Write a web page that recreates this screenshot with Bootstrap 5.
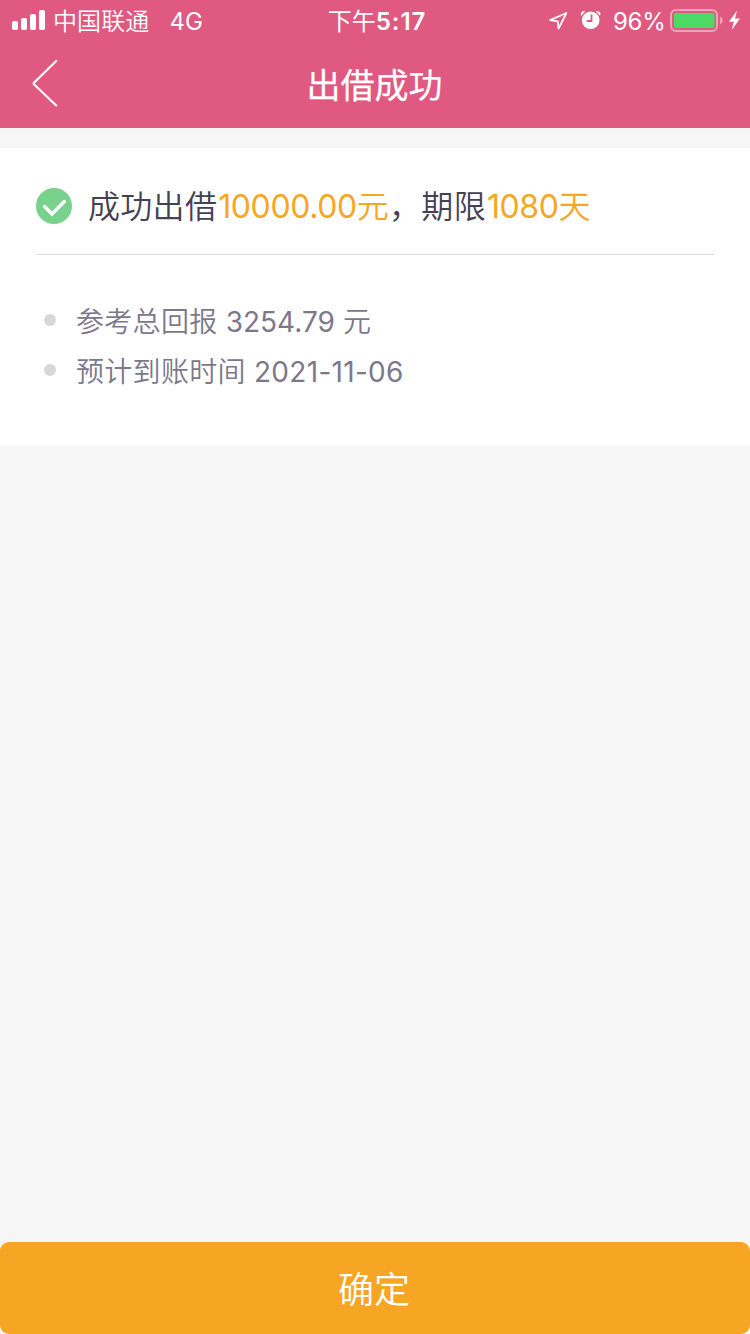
<!DOCTYPE html>
<html lang="zh-CN">
<head>
<meta charset="utf-8">
<meta name="viewport" content="width=device-width, initial-scale=1">
<title>出借成功</title>
<link href="https://cdn.jsdelivr.net/npm/bootstrap@5.3.0/dist/css/bootstrap.min.css" rel="stylesheet">
<style>
  body { background: #f6f6f6; font-family: Inter, "Noto Sans CJK SC", sans-serif; font-weight: 350; }
  i { font-style: normal; font-weight: 400; }
  svg { display: block; flex: none; }
  .app-header { background: #df5981; height: 128px; }
  .status-bar { height: 40px; font-size: 24px; line-height: 40px; }
  .status-bar span, .clock { padding-top: 2px; }
  .status-bar .side { flex: 1 1 0; }
  .status-bar .carrier { margin-left: 7px; padding-top: 4px; letter-spacing: .1px; }
  .status-bar .network { margin-left: 20px; padding-top: 3px; font-weight: 400; }
  .status-bar .percent { margin: 0 -1px 0 1px; padding-top: 3px; letter-spacing: -.3px; width: 51px; font-weight: 400; }
  .clock { font-weight: 400; }
  .clock b { font-weight: 600; letter-spacing: .9px; }
  .title-bar { height: 88px; padding: 0 32px; }
  .title-bar svg { margin-top: -2px; }
  .title-bar h1 { font-size: 34px; line-height: 88px; font-weight: 400; -webkit-text-stroke: .25px #fff; padding: 3px 1px 0 0; }
  .result { margin-top: 20px; height: 298px; padding: 0 36px; }
  .summary { height: 107px; border-bottom: 1px solid #dcdcdc; padding-top: 10px; color: #444155; font-size: 32px; letter-spacing: .3px; }
  .summary p { margin-left: 16px; padding-top: 2px; }
  .amount { color: #f7a623; }
  .amount i { letter-spacing: -.4px; margin-left: 1px; }
  .details { padding: 40px 8px 0; color: #7c788a; font-size: 28px; letter-spacing: .3px; }
  .details li { height: 50px; line-height: 50px; }
  .details p { padding-top: 3px; }
  .details i { letter-spacing: 0; }
  .details .date { letter-spacing: .3px; }
  .dot { width: 12px; height: 12px; background: #d8d8d8; margin-right: 20px; }
  .btn-confirm { height: 92px; border: 0; border-radius: 9px; background: #f7a623; font-size: 36px; font-weight: 350; padding: 9px 2px 6px 0; --bs-btn-color: #fff; --bs-btn-hover-color: #fff; }
</style>
</head>
<body>
<div class="d-flex flex-column vh-100">
  <header class="app-header text-white">
    <div class="status-bar d-flex">
      <div class="side d-flex align-items-center">
        <svg width="46" height="40" fill="#fff"><rect x="12" y="21" width="6" height="9" rx="1.8"/><rect x="21" y="18" width="6" height="12" rx="1.8"/><rect x="30" y="14" width="6" height="16" rx="1.8"/><rect x="39" y="10" width="6" height="20" rx="1.8"/></svg>
        <span class="carrier">中国联通</span><span class="network">4G</span>
      </div>
      <div class="clock ps-1">下午<b>5:17</b></div>
      <div class="side d-flex justify-content-end align-items-center">
        <svg width="65" height="40" viewBox="547 0 65 40">
          <path d="M566.400 13 550 20.100l7.800 1.300.8 7.300z" fill="none" stroke="#fff" stroke-width="1.800" stroke-linejoin="round"/>
          <circle cx="590.700" cy="20.300" r="8.800" fill="#fff"/>
          <path d="M581.200 16l-.5-2.500q.8-2.800 4.800-2.500zM600 16l.5-2.500q-.8-2.800-4.800-2.500z" fill="#fff"/>
          <path d="M591.500 14.500v6.500h-4.800" fill="none" stroke="#df5981" stroke-width="1.800"/>
        </svg>
        <span class="percent">96%</span>
        <svg width="87" height="40" viewBox="663 0 87 40">
          <rect x="671" y="10" width="46" height="21" rx="5" fill="none" stroke="#fff" stroke-opacity=".45" stroke-width="2"/>
          <rect x="674" y="13" width="40.500" height="15" rx="2" fill="#4cd964"/>
          <path d="M720 16.500q2.700 1.200 2.700 4t-2.700 4z" fill="#fff" fill-opacity=".45"/>
          <path d="M737 10.500 729 21.800h4.800L731.800 30l8.200-11.600h-4.900z" fill="#fff"/>
        </svg>
      </div>
    </div>
    <nav class="title-bar d-flex align-items-center justify-content-between">
      <svg width="26" height="48" viewBox="0 0 26 48" fill="none" stroke="#fff" stroke-width="2.200" stroke-linecap="round" stroke-linejoin="round"><path d="M24.200 2 2.200 23.500q-1 1 0 2l22 21"/></svg>
      <h1 class="mb-0">出借成功</h1>
      <span style="width:26px"></span>
    </nav>
  </header>

  <main class="result bg-white">
    <div class="summary d-flex align-items-center">
      <svg width="36" height="36" viewBox="0 0 36 36"><circle cx="18" cy="18" r="18" fill="#78d28c"/><path d="M8.500 18.500 16 26 28.300 13.500" fill="none" stroke="#fff" stroke-width="3.500" stroke-linecap="round"/></svg>
      <p class="mb-0">成功出借<span class="amount"><i>10000.00</i>元</span>，期限<span class="amount"><i>1080</i>天</span></p>
    </div>
    <ul class="details list-unstyled m-0">
      <li class="d-flex align-items-center"><span class="dot rounded-circle"></span><p class="mb-0">参考总回报 <i>3254.79</i> 元</p></li>
      <li class="d-flex align-items-center"><span class="dot rounded-circle"></span><p class="mb-0">预计到账时间 <i class="date">2021-11-06</i></p></li>
    </ul>
  </main>

  <button type="button" class="btn btn-confirm w-100 mt-auto">确定</button>
</div>
<script src="https://cdn.jsdelivr.net/npm/bootstrap@5.3.0/dist/js/bootstrap.bundle.min.js"></script>
</body>
</html>
